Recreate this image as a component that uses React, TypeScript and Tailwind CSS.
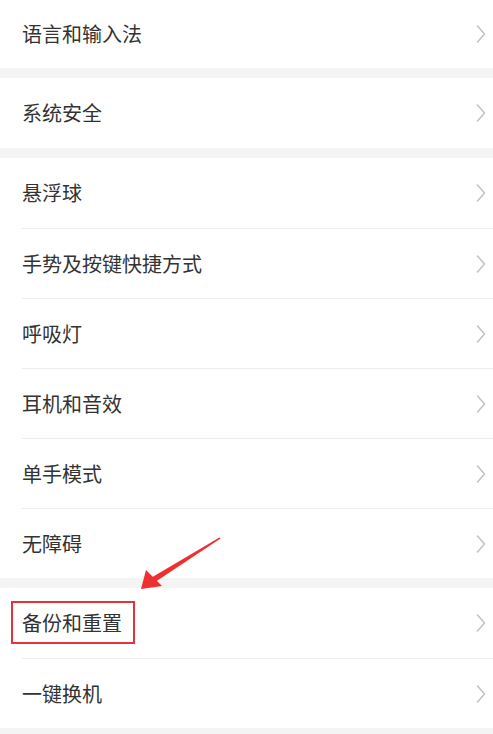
import React from 'react';

type Section = { items: string[] };

const SECTIONS: Section[] = [
  { items: ['语言和输入法'] },
  { items: ['系统安全'] },
  { items: ['悬浮球', '手势及按键快捷方式', '呼吸灯', '耳机和音效', '单手模式', '无障碍'] },
  { items: ['备份和重置', '一键换机'] },
];

function Chevron() {
  return (
    <svg width="10" height="18" viewBox="0 0 10 18" className="shrink-0">
      <path d="M1.5 1 L8.5 9 L1.5 17" fill="none" stroke="#c2c2c2" strokeWidth="1.5" strokeLinecap="round" strokeLinejoin="round" />
    </svg>
  );
}

function Row({ label, first, tall }: { label: string; first: boolean; tall?: boolean }) {
  const highlighted = label === '备份和重置';
  return (
    <div className="flex">
      <div className={`flex flex-1 items-center justify-between pr-[7px] ml-[22px] ${tall ? 'h-[68px]' : 'h-[70px]'} ${first ? '' : 'border-t border-[#ececec]'}`}>
        <span className="relative text-[20px] leading-none text-[#333333]">
          {label}
          {highlighted && (
            <span className="absolute -left-[11px] -right-[13px] -top-[12px] -bottom-[11px] border-2 border-[#e5333b]" />
          )}
        </span>
        <Chevron />
      </div>
    </div>
  );
}

export default function App() {
  return (
    <div
      className="relative w-[493px] h-[734px] overflow-hidden bg-[#f4f4f4]"
      style={{ fontFamily: '"Noto Sans CJK SC", "Noto Sans", sans-serif' }}
    >
      <div className="flex flex-col gap-[10px]">
        {SECTIONS.map((s, si) => (
          <div key={si} className="bg-white">
            {s.items.map((label, i) => (
              <Row key={label} label={label} first={i === 0} tall={si === 0} />
            ))}
          </div>
        ))}
      </div>

      {/* annotation arrow */}
      <svg className="absolute left-0 top-0 pointer-events-none" width="493" height="734" viewBox="0 0 493 734">
        <polygon points="220.6,538.4 219.4,537.6 151.6,577.6 154.4,582.4" fill="#ee3030" />
        <polygon points="141,589 146,570 162,586" fill="#ee3030" />
      </svg>
    </div>
  );
}
